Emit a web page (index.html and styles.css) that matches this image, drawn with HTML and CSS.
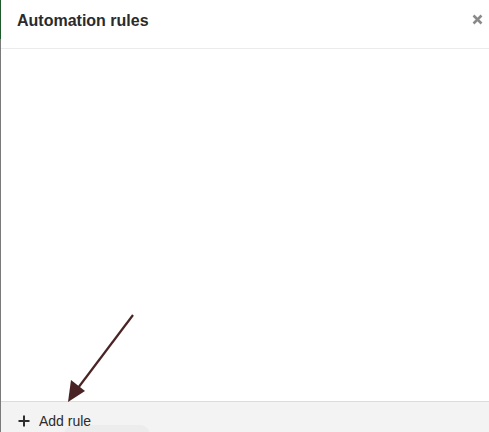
FILE: index.html
```html
<!DOCTYPE html>
<html>
<head>
<meta charset="utf-8">
<link rel="stylesheet" href="styles.css">
</head>
<body>
<div class="panel">
  <div class="edge"><div class="edge-top"></div><div class="edge-rest"></div></div>
  <div class="main">
    <header class="head">
      <h1 class="title">Automation rules</h1>
      <button class="close" aria-label="Close">
        <svg width="11" height="11" viewBox="0 0 11 11"><path d="M1.5 1.5 L9.5 9.5 M9.5 1.5 L1.5 9.5" stroke="#8a8a8a" stroke-width="2.5" stroke-linecap="butt"/></svg>
      </button>
    </header>
    <div class="body"></div>
    <footer class="foot">
      <div class="ghost"></div>
      <button class="add">
        <svg width="12" height="12" viewBox="0 0 12 12"><path d="M6 0.5 V11.5 M0.5 6 H11.5" stroke="#2e2e2e" stroke-width="2"/></svg>
        <span>Add rule</span>
      </button>
    </footer>
  </div>
  <svg class="arrow" width="489" height="432" viewBox="0 0 489 432">
    <line x1="133" y1="315" x2="78" y2="388" stroke="#4a2424" stroke-width="2.2"/>
    <polygon points="68,402 71,380 85,391" fill="#4a2424"/>
  </svg>
</div>
</body>
</html>
```
FILE: styles.css
```css
html, body { margin: 0; padding: 0; }
body { font-family: "Liberation Sans", Arial, sans-serif; background: #fff; width: 489px; height: 432px; overflow: hidden; }
.panel { position: relative; display: flex; width: 489px; height: 432px; }
.edge { width: 1px; display: flex; flex-direction: column; }
.edge-top { height: 39px; background: #1e5a2b; }
.edge-rest { flex: 1; background: #7a7a7a; }
.main { flex: 1; display: flex; flex-direction: column; min-width: 0; }
.head { border-bottom: 1px solid #ebebeb; display: flex; align-items: flex-start; justify-content: space-between; box-sizing: border-box; height: 49px; }
.title { margin: 0; padding: 11px 0 0 16px; font-size: 16px; font-weight: bold; color: #2b2b2b; line-height: 19px; }
.close { background: none; border: 0; padding: 0; margin: 14px 6px 0 0; width: 11px; height: 11px; display: flex; }
.body { flex: 1; }
.foot { height: 30px; border-top: 1px solid #dcdcdc; background: #f3f3f3; position: relative; }
.add { position: relative; z-index: 1; background: none; border: 0; padding: 0 0 0 17px; margin-top: 11px; display: flex; align-items: center; gap: 9px; font-family: "Liberation Sans", Arial, sans-serif; font-size: 14px; color: #2b2b2b; line-height: 16px; }
.ghost { position: absolute; left: 63px; top: 23px; width: 86px; height: 20px; border-radius: 10px; background: #ececec; }
.arrow { position: absolute; left: 0; top: 0; pointer-events: none; }
```
